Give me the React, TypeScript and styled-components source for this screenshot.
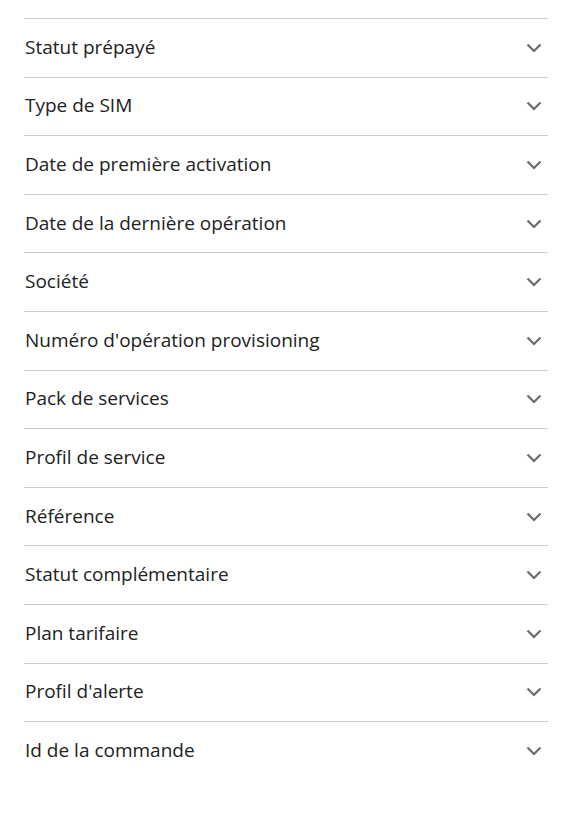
import * as React from 'react'
import styled, { createGlobalStyle } from 'styled-components'

const GlobalStyle = createGlobalStyle`
  body {
    margin: 0;
    background: #ffffff;
    font-family: 'Open Sans', 'Liberation Sans', sans-serif;
  }
`

const Page = styled.div`
  padding: 18px 23px 0 24px;
`

const List = styled.div`
  display: flex;
  flex-direction: column;
  border-top: 1px solid #cccccc;
`

const Item = styled.div<{ $last?: boolean }>`
  border-bottom: ${(p) => (p.$last ? 'none' : '1px solid #cccccc')};
`

const Header = styled.button`
  display: flex;
  align-items: center;
  justify-content: space-between;
  width: 100%;
  height: 57.6px;
  padding: 0 6px 0 1px;
  border: none;
  background: transparent;
  cursor: pointer;
  font-family: inherit;
`

const Label = styled.span`
  font-size: 19px;
  color: #222222;
  line-height: 1;
  margin-top: -1px;
`

const Chevron = () => (
  <svg width="16" height="10" viewBox="0 0 16 10" fill="none">
    <path d="M1.5 1.5 L8 8 L14.5 1.5" stroke="#6b6b6b" strokeWidth="2.2" />
  </svg>
)

const items = [
  'Statut prépayé',
  'Type de SIM',
  'Date de première activation',
  'Date de la dernière opération',
  'Société',
  "Numéro d'opération provisioning",
  'Pack de services',
  'Profil de service',
  'Référence',
  'Statut complémentaire',
  'Plan tarifaire',
  "Profil d'alerte",
  'Id de la commande',
]

export default function App() {
  return (
    <Page>
      <GlobalStyle />
      <List>
        {items.map((label, i) => (
          <Item key={label} $last={i === items.length - 1}>
            <Header>
              <Label>{label}</Label>
              <Chevron />
            </Header>
          </Item>
        ))}
      </List>
    </Page>
  )
}
